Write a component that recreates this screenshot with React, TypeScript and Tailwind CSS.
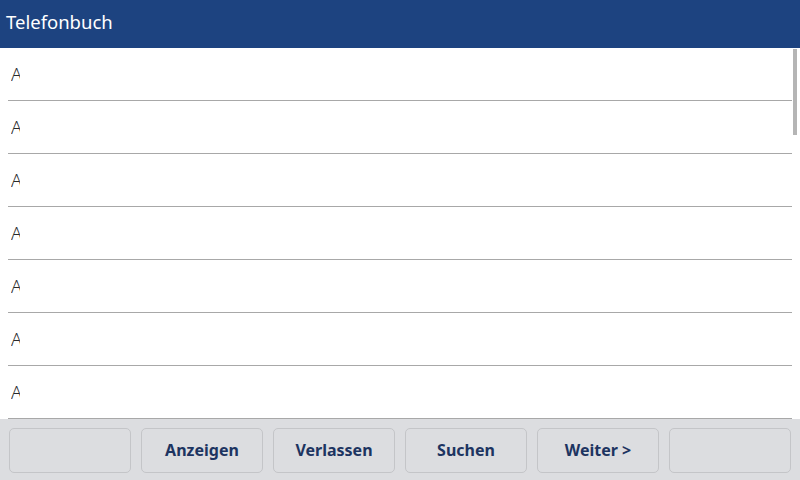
import React from "react";

const buttons = ["", "Anzeigen", "Verlassen", "Suchen", "Weiter >", ""];

export default function App() {
  return (
    <div
      className="w-[800px] h-[480px] flex flex-col bg-white overflow-hidden"
      style={{ fontFamily: '"Noto Sans", "Open Sans", sans-serif' }}
    >
      <div className="h-[48px] bg-[#1d4380] flex items-center px-[6px] pb-[3px]">
        <span className="text-white text-[18.5px] leading-none">Telefonbuch</span>
      </div>
      <div className="relative flex-1 flex flex-col">
        {Array.from({ length: 7 }).map((_, i) => (
          <div key={i} className="h-[53px] ml-[8px] mr-[8px] border-b border-[#a8a8a8] flex items-center pb-[1px]">
            <span className="ml-[3px] w-[9px] overflow-hidden text-[18px] leading-none text-[#2a2a2a] font-light">
              A
            </span>
          </div>
        ))}
        <div className="absolute right-[3px] top-[1px] w-[4px] h-[86px] bg-[#b5b5b5]" />
      </div>
      <div className="h-[61px] bg-[#dcdde0] flex items-center gap-[10px] px-[9px] pt-[1px]">
        {buttons.map((b, i) => (
          <div
            key={i}
            className="w-[122px] h-[45px] rounded-[5px] border border-[#c4c5c8] bg-[#dcdde0] flex items-center justify-center text-[#1d3461] font-bold text-[16px]"
          >
            {b}
          </div>
        ))}
      </div>
    </div>
  );
}
